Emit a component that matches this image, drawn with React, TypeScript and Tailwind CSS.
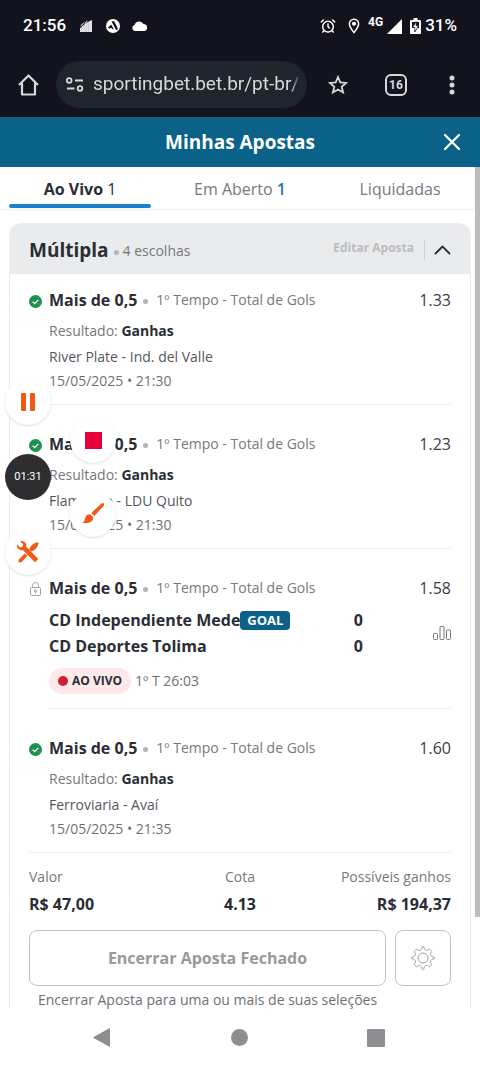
import React from 'react';
import { X, Pause, AlarmClock } from 'lucide-react';

interface Selection {
  id: number;
  odds: string;
  match?: string;
  date?: string;
}

const selections: Selection[] = [
  { id: 1, odds: '1.33', match: 'River Plate - Ind. del Valle', date: '15/05/2025 • 21:30' },
  { id: 2, odds: '1.23', match: 'Flamengo - LDU Quito', date: '15/05/2025 • 21:30' },
  { id: 3, odds: '1.58' },
  { id: 4, odds: '1.60', match: 'Ferroviaria - Avaí', date: '15/05/2025 • 21:35' },
];

const StatusBar: React.FC = () => (
  <div className="flex h-[52px] items-center justify-between px-[23px] text-[17px] font-medium text-white">
    <div className="flex items-center">
      <span>21:56</span>
      <svg className="ml-3.5 h-3 w-3" viewBox="0 0 12 12" fill="#e4e4e8">
        <path d="M0 12V8l1.900-1V12zM2 12V6.200l2-1.200v7zM4.100 12V4.500l2.100-1.500v9zM6.300 12V3L8.700 1.500V12zM8.800 12V1.500L12 0v12z" />
        <path d="M.5 5.500l3-3 .6.600L1 6.500zM4.500 3L7 .5l.5.500L5 4z" />
      </svg>
      <svg className="ml-[14px] h-[14px] w-[14px]" viewBox="0 0 14 14">
        <circle cx="7" cy="7" r="7" fill="#fff" />
        <path d="M5.500 2.200h2.600l4 7.800-2 1.300z" fill="#13131d" />
        <path d="M2 8.500l3.200-3 2.600 4.800-1.600-.2-1-1.400-1.800 1z" fill="#13131d" />
        <path d="M6 5l3.500 6" stroke="#fff" strokeWidth=".6" />
      </svg>
      <svg className="ml-3 h-[10px] w-4" viewBox="0 0 16 10" fill="#fff">
        <path d="M3 10a3 3 0 0 1-.4-5.900A4.800 4.800 0 0 1 11.500 3a3.600 3.600 0 0 1 1.200 7z" />
      </svg>
    </div>
    <div className="flex items-center">
      <AlarmClock size={16} strokeWidth={2.2} />
      <svg className="ml-3 h-4 w-3" viewBox="0 0 12 16" fill="none" stroke="#fff" strokeWidth="1.500">
        <path d="M6 14.500C3 11 1.400 8.300 1.400 5.800a4.600 4.600 0 0 1 9.200 0C10.600 8.300 9 11 6 14.500z" />
        <circle cx="6" cy="5.800" r="1.300" fill="#fff" />
      </svg>
      <span className="mb-2 ml-2 text-xs leading-4 font-bold">4G</span>
      <svg className="ml-1 h-[15px] w-[15px]" viewBox="0 0 15 15" fill="#fff">
        <path d="M15 0v15H0z" />
      </svg>
      <svg className="ml-2 h-4 w-[11px]" viewBox="0 0 11 16">
        <path d="M3.500 0h4v2H10a1 1 0 0 1 1 1v12a1 1 0 0 1-1 1H1a1 1 0 0 1-1-1V3a1 1 0 0 1 1-1h2.500z" fill="#fff" />
        <path d="M2 4h7v6H2z" fill="#13131d" />
        <path d="M6.200 3.500L2.500 9.500h2.300v4.500l3.800-6.200H6.200z" fill="#fff" stroke="#13131d" strokeWidth=".8" />
      </svg>
      <span className="ml-1">31%</span>
    </div>
  </div>
);

const BrowserBar: React.FC = () => (
  <div className="flex h-[65px] items-center px-[18px] text-[#d5d7df]">
    <button aria-label="Página inicial">
      <svg className="h-[22px] w-[21px]" viewBox="0 0 21 22" fill="none" stroke="currentColor" strokeWidth="2.200">
        <path d="M1 11L10.500 1.500 20 11M4 9v11.500h13V9" strokeLinejoin="round" />
      </svg>
    </button>
    <div className="ml-[17px] flex h-[47px] min-w-0 flex-1 items-center rounded-full bg-[#1e252d] pr-1.5 pl-2.5">
      <svg className="h-[15px] w-[18px] shrink-0" viewBox="0 0 18 15" fill="none" stroke="currentColor" strokeWidth="1.800">
        <circle cx="3.200" cy="3.500" r="2.300" />
        <path d="M9 3.500h8M1 11.500h7.500" />
        <circle cx="14" cy="11.500" r="2.300" />
      </svg>
      <input
        aria-label="Endereço"
        className="ml-[9px] w-full min-w-0 bg-transparent text-[19px] outline-none [mask-image:linear-gradient(to_right,black_95%,transparent)]"
        defaultValue="sportingbet.bet.br/pt-br/s"
      />
    </div>
    <button aria-label="Favoritar" className="ml-[21px]">
      <svg className="h-5 w-5" viewBox="0 0 20 20" fill="none" stroke="currentColor" strokeWidth="1.800">
        <path d="M10 2l2.300 5.400 5.900.5-4.500 3.900 1.400 5.700L10 14.500l-5.100 3 1.400-5.700L1.800 7.900l5.900-.5z" />
      </svg>
    </button>
    <button
      aria-label="Abas"
      className="ml-[37px] flex h-[22px] w-[22px] items-center justify-center rounded-md border-2 border-[#d5d7df] text-xs font-bold"
    >
      16
    </button>
    <button aria-label="Menu" className="ml-[35px] flex w-5 justify-center">
      <svg className="h-5 w-[6px]" viewBox="0 0 6 20" fill="currentColor">
        <circle cx="3" cy="3" r="2.500" />
        <circle cx="3" cy="10" r="2.500" />
        <circle cx="3" cy="17" r="2.500" />
      </svg>
    </button>
  </div>
);

const Tabs: React.FC = () => (
  <nav className="grid h-[43px] grid-cols-3 border-b border-[#f0f0f2] text-[#77787d]">
    <button className="relative pt-0.5 font-bold text-[#2a2d35]">
      Ao Vivo <span className="font-normal">1</span>
      <span className="absolute right-[9px] bottom-px left-[9px] h-1 rounded-full bg-[#1b80cf]" />
    </button>
    <button className="pt-0.5">
      Em Aberto <span className="font-semibold text-[#2778a8]">1</span>
    </button>
    <button className="pt-0.5">Liquidadas</button>
  </nav>
);

const WonIcon: React.FC = () => (
  <svg className="h-[13px] w-[13px]" viewBox="0 0 13 13">
    <circle cx="6.500" cy="6.500" r="6.500" fill="#1c9150" />
    <path d="M3.700 6.700l2 1.900 3.600-3.700" fill="none" stroke="#fff" strokeWidth="1.300" />
  </svg>
);

const LockIcon: React.FC = () => (
  <svg className="h-[14px] w-[13px]" viewBox="0 0 13 14" fill="none" stroke="#a3a4a8">
    <rect x="1.500" y="5.500" width="10" height="8" rx="1" />
    <path d="M3.500 5.500V3.500a3 3 0 0 1 6 0v2M6.500 9.500v2" />
    <circle cx="6.500" cy="8.800" r="1.200" />
  </svg>
);

const LiveScore: React.FC = () => (
  <>
    <div className="mt-[7px] flex items-center text-base leading-[26px] font-bold text-[#2a2d35]">
      <div className="min-w-0 flex-1">
        <div className="flex items-center">
          <span>CD Independiente Mede</span>
          <span className="rounded bg-[#0a6288] px-[7px] text-[13px] leading-[19px] text-white">GOAL</span>
          <span className="ml-auto">0</span>
        </div>
        <div className="flex items-center">
          <span>CD Deportes Tolima</span>
          <span className="ml-auto">0</span>
        </div>
      </div>
      <button aria-label="Estatísticas" className="flex w-[88px] justify-end">
        <svg className="h-[14px] w-[18px]" viewBox="0 0 18 14" fill="none" stroke="#74767c">
          <rect x=".5" y="7.500" width="4" height="6" rx="1" />
          <rect x="7" y=".5" width="4" height="13" rx="1" />
          <rect x="13.500" y="4" width="4" height="9.500" rx="1" />
        </svg>
      </button>
    </div>
    <div className="mt-[9px] flex h-[26px] items-center text-sm text-[#6f7076]">
      <span className="flex h-[26px] items-center rounded-full bg-[#fde8ea] px-[9px] text-xs font-bold text-[#2a2d35]">
        <span className="mr-1 h-[10px] w-[10px] rounded-full bg-[#cd2037]" />
        AO VIVO
      </span>
      <span className="ml-1">1º T 26:03</span>
    </div>
  </>
);

const SelectionRow: React.FC<{ item: Selection }> = ({ item }) => {
  const isLive = !item.match;

  return (
    <li className="group flex border-[#ededf0] pt-[27px] first:pt-3.5 last:border-b">
      <div className="flex h-6 w-5 shrink-0 items-center pt-0.5">{isLive ? <LockIcon /> : <WonIcon />}</div>
      <div
        className={
          isLive
            ? 'min-w-0 flex-1 border-b border-[#ededf0] pb-3.5'
            : 'min-w-0 flex-1 border-b border-[#ededf0] pb-[11px] group-last:border-b-0'
        }
      >
        <div className="flex h-6 items-center">
          <span className="text-base font-bold text-[#2a2d35]">Mais de 0,5</span>
          <span className="mt-0.5 ml-1.5 h-[5px] w-[5px] rounded-full bg-[#b4b5b9]" />
          <span className="ml-2 text-sm text-[#77787d]">1º Tempo - Total de Gols</span>
          <span className="ml-auto text-base text-[#3b3d44]">{item.odds}</span>
        </div>
        {isLive ? (
          <LiveScore />
        ) : (
          <div className="text-sm leading-6">
            <p className="mt-[7px] mb-0.5 text-[#77787d]">
              Resultado: <b className="text-[#2a2d35]">Ganhas</b>
            </p>
            <p className="text-[#55575e]">{item.match}</p>
            <p className="text-[#6f7076]">{item.date}</p>
          </div>
        )}
      </div>
    </li>
  );
};

const BetTotals: React.FC = () => (
  <dl className="grid grid-cols-3 pt-3 text-sm leading-6 text-[#77787d]">
    <div>
      <dt>Valor</dt>
      <dd className="mt-[3px] text-base leading-6 font-bold text-[#2a2d35]">R$ 47,00</dd>
    </div>
    <div className="text-center">
      <dt>Cota</dt>
      <dd className="mt-[3px] text-base leading-6 font-bold text-[#2a2d35]">4.13</dd>
    </div>
    <div className="text-right">
      <dt>Possíveis ganhos</dt>
      <dd className="mt-[3px] text-base leading-6 font-bold text-[#2a2d35]">R$ 194,37</dd>
    </div>
  </dl>
);

const BetCard: React.FC = () => (
  <section className="mx-[9px] mt-[13px] overflow-hidden rounded-t-xl border border-b-0 border-[#ededf0]">
    <header className="flex h-[50px] items-center bg-[#eaebec] px-[19px] pt-0.5">
      <h2 className="text-[19px] font-bold text-[#2a2d35]">Múltipla</h2>
      <span className="mt-1 ml-[5px] h-[5px] w-[5px] rounded-full bg-[#b4b5b9]" />
      <span className="ml-1 pt-0.5 text-sm text-[#77787d]">4 escolhas</span>
      <button className="mb-1 ml-auto text-xs font-bold text-[#bcbdc0]">Editar Aposta</button>
      <button aria-label="Recolher" className="ml-2.5 border-l border-[#cfd0d3] pl-[9px] text-[#2a2d35]">
        <svg className="h-5 w-[17px]" viewBox="0 0 17 20" fill="none" stroke="currentColor" strokeWidth="1.800">
          <path d="M1 14l7.500-7.500L16 14" />
        </svg>
      </button>
    </header>
    <div className="px-[19px]">
      <ul>
        {selections.map((item) => (
          <SelectionRow key={item.id} item={item} />
        ))}
      </ul>
      <BetTotals />
      <div className="mt-3.5 flex gap-[9px]">
        <button className="h-14 flex-1 rounded-lg border border-[#c3c2c9] font-bold text-[#98999d]">Encerrar Aposta Fechado</button>
        <button aria-label="Configurações" className="flex h-14 w-14 items-center justify-center rounded-lg border border-[#c3c2c9]">
          <svg className="h-6 w-6" viewBox="0 0 24 24" fill="none" stroke="#a3a2aa" strokeLinejoin="round">
            <circle cx="12" cy="12" r="5" />
            <path d="M9.500 4.200Q11 3.700 11.200.7h1.600Q13 3.700 14.500 4.200T18.500 3.200l2.300 2.300Q18.800 7.500 19.700 9.400T23.300 11.200v1.600Q20.300 13 19.700 14.600T20.800 18.500l-2.300 2.300Q16.500 18.800 14.600 19.700T12.800 23.300h-1.600Q11 20.300 9.400 19.700T5.500 20.800l-2.300-2.300Q5.200 16.500 4.300 14.600T.7 12.800v-1.600Q3.700 11 4.300 9.400T3.200 5.500l2.300-2.300Q7.500 5.200 9.500 4.200z" />
          </svg>
        </button>
      </div>
      <p className="h-[23px] px-[9px] pt-1 text-sm text-[#6f7076]">Encerrar Aposta para uma ou mais de suas seleções</p>
    </div>
  </section>
);

// Floating controls of the screen recorder
const RecorderControls: React.FC = () => (
  <div>
    <button aria-label="Pausar" className="absolute top-[379px] left-[5px] flex h-[46px] w-[46px] items-center justify-center rounded-full bg-white shadow-sm">
      <Pause size={24} fill="#f05a14" stroke="none" />
    </button>
    <button aria-label="Parar" className="absolute top-[417px] left-[70px] flex h-[46px] w-[46px] items-center justify-center rounded-full bg-white shadow-sm">
      <span className="h-[17px] w-[17px] bg-[#e6003a]" />
    </button>
    <div className="absolute top-[454px] left-[5px] flex h-[46px] w-[46px] items-center justify-center rounded-full bg-[#2e2d30] font-[Roboto,sans-serif] text-[11px] text-white">
      01:31
    </div>
    <button aria-label="Pincel" className="absolute top-[491px] left-[70px] flex h-[46px] w-[46px] items-center justify-center rounded-full bg-white shadow-sm">
      <svg className="h-6 w-6" viewBox="0 0 24 24" fill="#f05a14">
        <path d="M20.500 1.500a1.500 1.500 0 0 1 2.200 2.200L13.500 14l-3.200-3z" />
        <path d="M9 12.200l3.300 3.100c.5 3.700-4 7.200-11.300 5.200 2.500-.5 2.500-2 3-4.300.500-2.500 2.700-4.200 5-4z" />
      </svg>
    </button>
    <button aria-label="Ferramentas" className="absolute top-[529px] left-[5px] flex h-[46px] w-[46px] items-center justify-center rounded-full bg-white shadow-sm">
      <svg className="h-6 w-6" viewBox="0 0 24 24" fill="#f05a14">
        <path d="M1 4.500l3.200 3 2.300-.8.700-2.500L4.300 1.200c3-1 6.500 1.200 6 5.500l12 12.300-3.200 3.200L7 10.200C3.800 10.800.2 8.300 1 4.500z" />
        <path d="M8.800 13.500l2.500 2.500-5.800 6.200c-1.800 1.300-4-.9-2.700-2.700zM13.200 9.500c1-3.500 4.500-6.800 9.300-7.300-.2 4.300-3 7.800-7 9.200z" />
      </svg>
    </button>
  </div>
);

const NavigationBar: React.FC = () => (
  <div className="flex h-[57px] items-center justify-between bg-white px-[93px]">
    <button aria-label="Voltar">
      <svg className="h-[19px] w-[18px]" viewBox="0 0 18 19" fill="#8f8d92">
        <path d="M17 0v19L1 10.300a1 1 0 0 1 0-1.600z" />
      </svg>
    </button>
    <button aria-label="Início" className="h-[17px] w-[17px] rounded-full bg-[#8f8d92]" />
    <button aria-label="Recentes" className="mr-0.5 h-[18px] w-[18px] rounded-[1px] bg-[#8f8d92]" />
  </div>
);

export default function App() {
  return (
    <div className="relative w-full bg-white font-['Open_Sans','Noto_Sans',sans-serif] text-base">
      <div className="bg-[#12131d] font-[Roboto,sans-serif]">
        <StatusBar />
        <BrowserBar />
      </div>
      <header className="relative flex h-[50px] items-center justify-center bg-[#0a6288] text-white">
        <h1 className="text-[19px] font-bold">Minhas Apostas</h1>
        <button aria-label="Fechar" className="absolute right-[14px]">
          <X size={28} strokeWidth={2} />
        </button>
      </header>
      <main className="relative">
        <Tabs />
        <BetCard />
        <div className="absolute top-0 right-0 h-[750px] w-[5px] bg-[#bcbcbf]" />
      </main>
      <NavigationBar />
      <RecorderControls />
    </div>
  );
}
